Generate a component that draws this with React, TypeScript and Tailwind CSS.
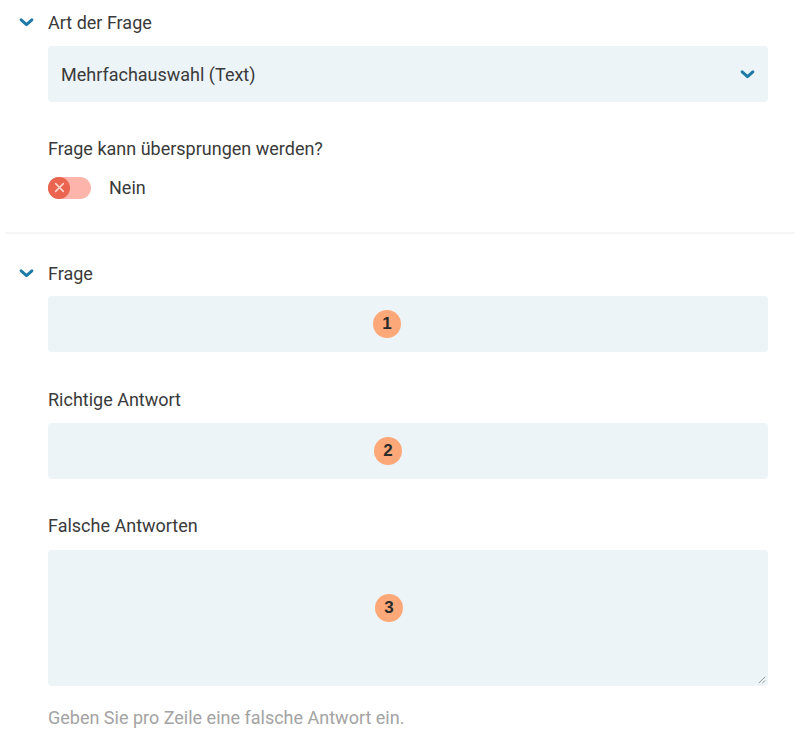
import { useState } from "react"

function Chevron({ className = "" }: { className?: string }) {
  return (
    <svg viewBox="0 0 14 10" className={className} fill="none">
      <path d="M2 2.5 L7 7 L12 2.5" stroke="currentColor" strokeWidth="2.8" strokeLinecap="round" strokeLinejoin="round" />
    </svg>
  )
}

function Badge({ n }: { n: number }) {
  return (
    <span className="absolute flex h-[28px] w-[28px] items-center justify-center rounded-full bg-[#fda878] text-[17px] font-bold text-[#2a2a2a] font-['Liberation_Sans',sans-serif]">
      {n}
    </span>
  )
}

function SectionHead({ title }: { title: string }) {
  return (
    <div className="flex h-[24px] items-center">
      <Chevron className="ml-[19px] w-[15px] h-[11px] text-[#1e7aa6]" />
      <span className="ml-[14px] text-[18px] text-[#3a3a3a]">{title}</span>
    </div>
  )
}

export default function App() {
  const [skip, setSkip] = useState(false)

  return (
    <div className="w-[800px] h-[740px] bg-white font-['Roboto',sans-serif] text-[#3a3a3a] overflow-hidden">
      {/* Art der Frage */}
      <div className="pt-[10px]">
        <SectionHead title="Art der Frage" />
        <div className="ml-[48px] mr-[32px] mt-[12px] flex h-[56px] items-center justify-between rounded-[4px] bg-[#ecf4f8] px-[13px]">
          <span className="text-[18px] text-[#3a3a3a]">Mehrfachauswahl (Text)</span>
          <Chevron className="w-[15px] h-[11px] text-[#1e7aa6]" />
        </div>

        <div className="ml-[48px] mt-[35px] text-[18px] leading-[24px]">Frage kann übersprungen werden?</div>
        <div className="ml-[48px] mt-[13px] flex items-center">
          <button
            onClick={() => setSkip(!skip)}
            className="relative flex h-[22px] w-[43px] items-center rounded-full bg-[#fdb4aa]"
          >
            <span className="absolute left-0 flex h-[22px] w-[22px] items-center justify-center rounded-full bg-[#ea6450]">
              <svg viewBox="0 0 10 10" className="w-[11px] h-[11px]">
                <path d="M1.5 1.5 L8.5 8.5 M8.5 1.5 L1.5 8.5" stroke="#fcd6cf" strokeWidth="1.4" strokeLinecap="round" />
              </svg>
            </span>
          </button>
          <span className="ml-[18px] text-[18px]">{skip ? "Ja" : "Nein"}</span>
        </div>
      </div>

      <div className="mx-[5px] mt-[31px] h-[2px] bg-[#f6f6f6]" />

      {/* Frage */}
      <div className="pt-[27px]">
        <SectionHead title="Frage" />
        <div className="relative ml-[48px] mr-[32px] mt-[11px] h-[56px] rounded-[4px] bg-[#ecf4f8] flex items-center">
          <div className="relative ml-[325px] h-[28px] w-[28px] flex items-center">
            <Badge n={1} />
          </div>
        </div>

        <div className="ml-[48px] mt-[36px] text-[18px] leading-[24px]">Richtige Antwort</div>
        <div className="relative ml-[48px] mr-[32px] mt-[11px] h-[56px] rounded-[4px] bg-[#ecf4f8] flex items-center">
          <div className="relative ml-[326px] h-[28px] w-[28px] flex items-center">
            <Badge n={2} />
          </div>
        </div>

        <div className="ml-[48px] mt-[35px] text-[18px] leading-[24px]">Falsche Antworten</div>
        <div className="relative ml-[48px] mr-[32px] mt-[12px] h-[136px] rounded-[4px] bg-[#ecf4f8]">
          <div className="relative ml-[327px] pt-[44px] h-[28px] w-[28px]">
            <Badge n={3} />
          </div>
          <svg viewBox="0 0 10 10" className="absolute right-[2px] bottom-[2px] w-[9px] h-[9px]">
            <path d="M9 2 L2 9 M9 6 L6 9" stroke="#8a8a8a" strokeWidth="1" />
          </svg>
        </div>
        <div className="ml-[48px] mt-[20px] text-[18px] leading-[24px] text-[#a3a3a3]">Geben Sie pro Zeile eine falsche Antwort ein.</div>
      </div>
    </div>
  )
}
